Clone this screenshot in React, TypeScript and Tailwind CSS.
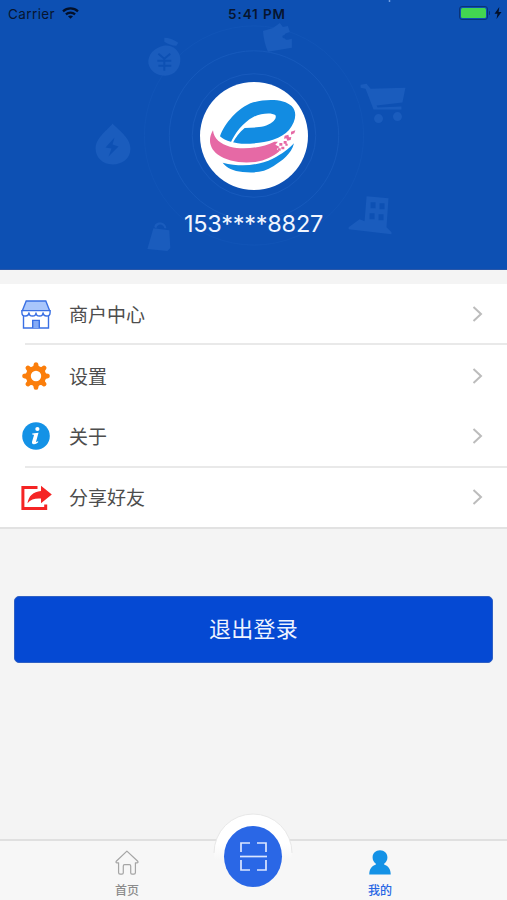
import type { ReactNode } from "react";

const menu: { label: string; icon: ReactNode; divider?: string }[] = [
  { label: "商户中心", icon: <ShopIcon />, divider: "ml-[25px] bg-[#e9e9e9]" },
  { label: "设置", icon: <GearIcon /> },
  { label: "关于", icon: <InfoIcon />, divider: "ml-[25px] bg-[#e9e9e9]" },
  { label: "分享好友", icon: <ShareIcon />, divider: "bg-[#e2e2e2]" },
];

function ShopIcon() {
  return (
    <svg viewBox="0 0 30 29" className="mt-px h-[29px] w-[30px]" fill="none" stroke="#3a70e4" strokeWidth="1.4">
      <path d="M2.500 15v13h25V15" fill="#fff" />
      <path d="M5.200 1h19.600l3.800 9.600H1.400z" fill="#a9c6fb" />
      <path
        d="M.9 10.600h28.200v1.800c0 4.800-6.800 4.800-7.100 0 0 4.800-7 4.800-7 0 0 4.800-7 4.800-7 0-.3 4.800-7.100 4.800-7.100 0z"
        fill="#fff"
      />
      <path d="M11.700 28v-7.600h6.600V28" fill="#85abf5" />
    </svg>
  );
}

function GearIcon() {
  return (
    <svg viewBox="-14 -14 28 28" className="size-7" fill="#fb7e0b">
      {[0, 45, 90, 135, 180, 225, 270, 315].map((deg) => (
        <path key={deg} d="M-3.600-8.500Q-2.300-10-2.200-12.200Q-2-13.800 0-13.800T2.200-12.200Q2.300-10 3.600-8.500z" transform={`rotate(${deg})`} />
      ))}
      <circle r="7.700" fill="none" stroke="#fb7e0b" strokeWidth="5" />
    </svg>
  );
}

function InfoIcon() {
  return (
    <svg viewBox="0 0 28 28" className="mt-px size-7">
      <circle cx="14" cy="14" r="13.800" fill="#1492e6" />
      <circle cx="15.400" cy="7" r="2.100" fill="#fff" />
      <path
        d="M10.200 11.400l6.300-.7-2.400 8.700c-.2.900.5.800 1.800-.1l.5.700c-1.800 1.800-3.300 2.300-4.600 2.200-1.800-.1-2.100-1.200-1.700-2.700l1.800-6.100c.2-.8-.4-.9-1.800-1z"
        fill="#fff"
      />
    </svg>
  );
}

function ShareIcon() {
  return (
    <svg viewBox="0 0 31 26" className="mt-0.5 h-[26px] w-[31px]">
      <path d="M16.500 2.600H1.900v20.800h22.800v-4" fill="none" stroke="#f52424" strokeWidth="3" />
      <path d="M20 .8l10.800 8.800L20 18.200v-4.600c-6.200-.4-10.200.8-13.500 4.700C7.600 11 12.200 6.600 20 6z" fill="#f52424" />
    </svg>
  );
}

function Logo() {
  return (
    <svg viewBox="30 29 324 324" className="size-[108px]">
      <circle cx="192" cy="191" r="162" fill="#fff" />
      <path
        d="M90 192C104 154 142 106 190 90C232 78 284 80 305 101C323 119 317 150 297 173C272 202 224 211 180 214C144 217 108 208 90 192z"
        fill="#128ce2"
      />
      <path
        d="M122 211C134 184 158 151 190 134C213 122 245 120 256 128C263 141 243 156 222 162C202 167 182 165 164 167C149 179 136 195 128 213z"
        fill="#fff"
      />
      <path
        d="M69 174C54 198 57 226 82 246C112 268 152 273 196 269C226 265 249 253 268 237L260 230L269 224L256 217L264 208L253 208C218 226 160 234 120 223C92 215 71 200 69 174z"
        fill="#e669a5"
      />
      <path
        d="M98 271C158 286 208 278 248 259C276 246 297 228 312 213C304 246 276 265 250 282C222 301 190 302 158 299C130 296 109 286 98 271z"
        fill="#128ce2"
      />
      <g fill="#e669a5">
        <path d="M268 212h9v8h-9zM281 206h9v8h-9zM274 223h9v8h-9zM264 228h8v7h-8zM286 214h7v6h-7z" />
        <path d="M284 190l11-3 2 8 7-1-2 9-10 2-3-7-7 1zM303 178l13-4-3 9-10 4z" />
      </g>
    </svg>
  );
}

// faint rings and shopping glyphs behind the avatar
function Backdrop() {
  return (
    <svg viewBox="0 0 507 270" className="absolute inset-0 h-full w-full">
      <g fill="none" stroke="#1a5dbf" strokeWidth="1">
        <circle cx="254" cy="136" r="62" strokeOpacity=".8" />
        <circle cx="254" cy="136" r="85" strokeOpacity=".75" />
        <circle cx="254" cy="136" r="110" strokeOpacity=".3" />
      </g>
      <g fill="#1a5cbd">
        <path d="M163 46c8-2 16 4 17 12 1 10-6 18-15 18-8 0-15-4-17-12-1-9 6-16 15-18zM164 38c4 0 10 2 14 5l-2 3c-4 0-9-2-12-4z" />
        <path d="M112 124c5 6 18 14 18 25 0 10-8 16-18 16s-17-7-17-16c0-11 13-19 17-25z" />
        <path d="M263 31l10-3 7-5 3 4 5-1 2 6-3 1c-4 1-4 7 1 7l4-1 0 9-24 4q-4-9-5-21z" />
        <path d="M361 85l6-1 4 5 35-1-3 15-26 3 1 2 24-1v3h-28l-8-21-5-1z" />
        <circle cx="379" cy="119" r="4.500" />
        <circle cx="398" cy="117" r="4.500" />
        <path
          fillRule="evenodd"
          d="M367 197l22 2-2 29 5 5v2l-43-5v-2l11-8 5 2zM371 203v6h5v-6zM380 204v6h5v-6zM370 214v6h5v-6zM379 215v6h5v-6z"
        />
        <path d="M153 229l16 2 1 18-3 3-20-2zM154 228c0-7 12-6 12 1h-2c-1-5-7-5-8 0z" />
      </g>
      <path d="M114 138l-9 10 6 1-3 8 10-10-6-2z" fill="#0d50b3" />
      <path d="M158 54l6 5 6-5M164 59v12M157 61h14M158 66h13" fill="none" stroke="#0d50b3" strokeWidth="2" />
      <circle cx="284" cy="37" r="1.500" fill="#0d50b3" />
      <path d="M390 0v2" stroke="#6f9de0" strokeWidth="1.500" />
    </svg>
  );
}

function StatusBar() {
  return (
    <div className="relative flex h-7 items-center justify-between pr-[5px] pl-2 text-[#07152f]">
      <div className="flex w-40 items-center gap-[7px]">
        <span className="text-[13.5px] tracking-[0.4px]">Carrier</span>
        <svg viewBox="0 0 17 12" className="-mt-0.5 h-3 w-[17px]" fill="none" stroke="#031029" strokeWidth="2.200">
          <path d="M1 4.400c4.200-4 10.800-4 15 0M3.900 7.400c2.600-2.400 6.600-2.400 9.200 0" />
          <path d="M8.500 11.800L6 9.300c1.400-1.200 3.600-1.200 5 0z" fill="#031029" stroke="none" />
        </svg>
      </div>
      <span className="text-[13.5px] font-semibold tracking-[0.9px]">5:41 PM</span>
      <div className="-mt-0.5 flex w-[156px] items-center justify-end gap-[4px]">
        <div className="flex items-center gap-px">
          <div className="h-[14px] w-[29px] rounded-[3px] border border-[#0a3378] p-px">
            <div className="h-full rounded-[1.5px] bg-[#43d551]" />
          </div>
          <div className="h-1 w-[1.5px] rounded-r bg-[#0a3378]" />
        </div>
        <svg viewBox="0 0 8 12" className="h-3 w-2" fill="#031029">
          <path d="M5.300 0L.5 6.800h3L2.500 12l5-7H4.600z" />
        </svg>
      </div>
    </div>
  );
}

function TabBar() {
  return (
    <nav className="relative flex h-[61px] border-t-2 border-[#e0e0e0] bg-[#f7f7f7] text-xs font-medium">
      <a className="flex w-[254px] flex-col items-center pt-[9px] text-[#8b8b8b]">
        <svg viewBox="0 0 26 27" className="h-[27px] w-[26px]" fill="none" stroke="#a5a5a5" strokeWidth="1.300" strokeLinejoin="round">
          <path d="M12.900 1.200L24.600 12.200c.7.800.1 1.700-.8 1.700h-1.700v10.400c0 1.200-.6 1.700-1.700 1.700h-2c-.9 0-1.400-.5-1.400-1.400v-7.200c0-1-.5-1.500-1.400-1.500h-5.200c-.9 0-1.400.5-1.400 1.500v7.200c0 .9-.5 1.400-1.400 1.400h-2c-1.100 0-1.700-.5-1.700-1.700V13.900H2.200c-.9 0-1.500-.9-.8-1.700z" />
        </svg>
        <span className="mt-[7px] leading-[18px]">首页</span>
      </a>
      <a className="flex w-[252px] flex-col items-center pt-[9px] text-[#2766e4]">
        <svg viewBox="0 0 24 27" className="h-[27px] w-6" fill="#1492e6">
          <path d="M12 .4c4.600 0 8 3.400 8 7.600 0 3-1.500 5-3.400 6.600v1.200c4.600 1.300 7 5 7 10.700H.4c0-5.700 2.400-9.400 7-10.700v-1.200C5.500 13 4 11 4 8 4 3.800 7.400.4 12 .4z" />
        </svg>
        <span className="mt-[7px] leading-[18px]">我的</span>
      </a>
      {/* Raised scan button */}
      <svg viewBox="0 0 80 88" className="absolute -top-[28px] left-[213px] h-[88px] w-20">
        <defs>
          <linearGradient id="rim" x1="0" y1="0" x2="0" y2="1">
            <stop offset="0" stopColor="#fff" />
            <stop offset=".38" stopColor="#fff" />
            <stop offset=".58" stopColor="#f7f7f7" />
          </linearGradient>
        </defs>
        <circle cx="40" cy="40" r="39" fill="url(#rim)" />
        <path d="M1 40a39 39 0 0 1 78 0" fill="none" stroke="#e8e8e8" />
        <ellipse cx="40" cy="43.500" rx="29" ry="30.500" fill="#2a67e6" />
        <g fill="none" stroke="#dbe6ff" strokeWidth="1.700">
          <path d="M28 39v-9h9M44 30h9v9M28 47v10h9M44 57h9V47" />
          <path d="M27 43.500h27" />
        </g>
      </svg>
    </nav>
  );
}

export default function App() {
  return (
    <div className="flex h-[900px] w-[507px] flex-col overflow-hidden bg-[#f4f4f4] font-['Inter','Noto_Sans_CJK_SC',sans-serif]">
      <header className="relative h-[270px] shrink-0 border-b border-[#2a57a8] bg-[#0d50b3]">
        <Backdrop />
        <StatusBar />
        <div className="relative flex flex-col items-center pt-[54px]">
          <Logo />
          <p className="mt-[18px] text-[23.5px] leading-8 tracking-[-0.25px] text-[#f1f6ff]">153****8827</p>
        </div>
      </header>

      <ul className="mt-[14px] bg-white">
        {menu.map((item) => (
          <li key={item.label} className="flex h-[61.2px] flex-col">
            <div className="flex flex-1 items-center pr-6 pl-5">
              <div className="flex w-8 justify-center">{item.icon}</div>
              <span className="mt-1 ml-[17px] flex-1 text-[19px] leading-7 text-[#4d4d4d]">{item.label}</span>
              <svg viewBox="0 0 11 16" className="h-4 w-[11px]" fill="none" stroke="#bcbcbc" strokeWidth="2">
                <path d="M1.500 1l7.500 7-7.500 7" />
              </svg>
            </div>
            {item.divider && <div className={`h-[2px] ${item.divider}`} />}
          </li>
        ))}
      </ul>

      <button className="mx-[14px] mt-[67px] h-[67px] rounded-[5px] border border-[#2f60c4] bg-[#0549d3] text-[22px] tracking-[0.3px] text-[#eef3ff]">
        退出登录
      </button>

      <div className="mt-auto">
        <TabBar />
      </div>
    </div>
  );
}
